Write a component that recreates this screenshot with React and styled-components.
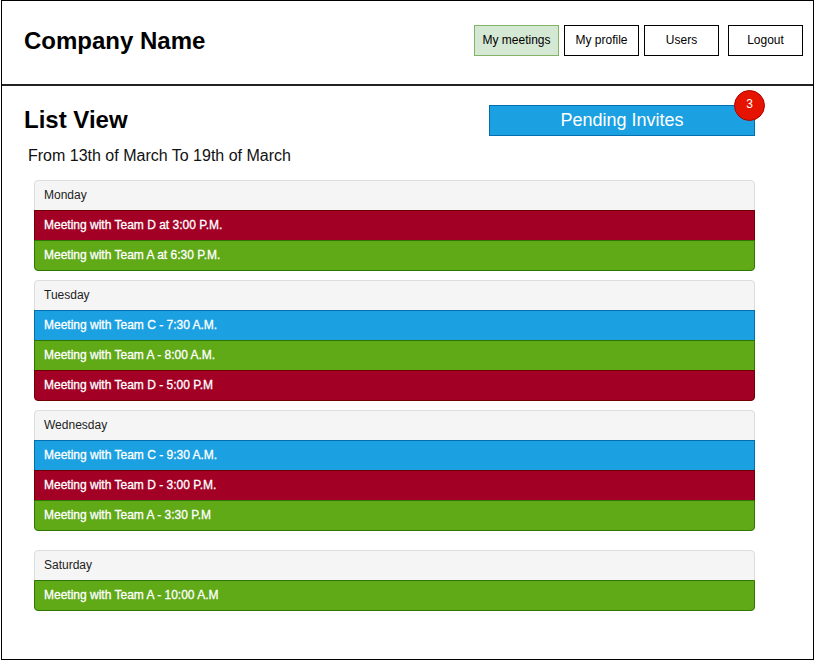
import React from "react"
import styled, { createGlobalStyle } from "styled-components"

const GlobalStyle = createGlobalStyle`
	body {
		margin: 0;
		font-family: "Liberation Sans", Arial, Helvetica, sans-serif;
		background: #fff;
	}
	* {
		box-sizing: border-box;
	}
`

const Frame = styled.div`
	margin-left: 1px;
	width: 813px;
	height: 660px;
	border: 1px solid #000;
	overflow: hidden;
`
const Header = styled.header`
	display: flex;
	justify-content: space-between;
	align-items: flex-start;
	height: 85px;
	padding: 0 10px 0 22px;
	border-bottom: 2px solid #222;
`
const Brand = styled.h1`
	margin: 26px 0 0;
	font-size: 24px;
	font-weight: bold;
	color: #000;
`
const Nav = styled.nav`
	display: flex;
	margin-top: 24px;
`
const NavButton = styled.button`
	width: ${p => p.$width || 75}px;
	height: 31px;
	margin-left: ${p => p.$gap || 5}px;
	padding: 0 0 1px;
	font-family: inherit;
	font-size: 12px;
	color: #000;
	background: ${p => (p.$active ? "#d5e8d4" : "#fff")};
	border: 1px solid ${p => (p.$active ? "#82b366" : "#000")};
	border-radius: 0;
	cursor: pointer;
`
const Main = styled.main`
	padding: 0 58px 0 22px;
`
const TitleRow = styled.div`
	display: flex;
	justify-content: space-between;
	align-items: flex-start;
`
const Title = styled.h2`
	margin: 20px 0 0;
	font-size: 24px;
	font-weight: bold;
	color: #000;
`
const PendingButton = styled.button`
	position: relative;
	width: 266px;
	height: 31px;
	margin-top: 19px;
	padding: 0;
	font-family: inherit;
	font-size: 18px;
	color: #fff;
	background: #1ba1e2;
	border: 1px solid #006eaf;
	border-radius: 0;
	cursor: pointer;
`
const Badge = styled.span`
	position: absolute;
	top: -16px;
	right: -11px;
	width: 31px;
	height: 31px;
	display: flex;
	align-items: center;
	justify-content: center;
	padding-bottom: 3px;
	font-size: 12px;
	color: #fff;
	background: #e51400;
	border: 1px solid #b20000;
	border-radius: 50%;
`
const Range = styled.p`
	margin: 11px 0 0 4px;
	font-size: 16px;
	color: #111;
`
const DayList = styled.div`
	margin: 15px 0 0 10px;
`
const DayCard = styled.section`
	margin-top: ${p => p.$gap}px;
	&:first-child {
		margin-top: 0;
	}
`
const DayHeader = styled.div`
	height: 31px;
	display: flex;
	align-items: center;
	padding: 0 0 1px 9px;
	font-size: 12px;
	color: #222;
	background: #f5f5f5;
	border: 1px solid #ddd;
	border-radius: 4px 4px 0 0;
`
const colors = {
	red: ["#a20025", "#6f0000"],
	green: ["#60a917", "#2d7600"],
	blue: ["#1ba1e2", "#006eaf"]
}
const MeetingRow = styled.div`
	height: 31px;
	margin-top: -1px;
	display: flex;
	align-items: center;
	padding: 0 0 1px 9px;
	font-size: 12px;
	color: #fff;
	-webkit-text-stroke: 0.3px #fff;
	background: ${p => colors[p.$color][0]};
	border: 1px solid ${p => colors[p.$color][1]};
	&:last-child {
		border-radius: 0 0 4px 4px;
	}
`

const days = [
	{
		name: "Monday",
		gap: 9,
		meetings: [
			["red", "Meeting with Team D at 3:00 P.M."],
			["green", "Meeting with Team A at 6:30 P.M."]
		]
	},
	{
		name: "Tuesday",
		gap: 9,
		meetings: [
			["blue", "Meeting with Team C - 7:30 A.M."],
			["green", "Meeting with Team A - 8:00 A.M."],
			["red", "Meeting with Team D - 5:00 P.M"]
		]
	},
	{
		name: "Wednesday",
		gap: 9,
		meetings: [
			["blue", "Meeting with Team C - 9:30 A.M."],
			["red", "Meeting with Team D - 3:00 P.M."],
			["green", "Meeting with Team A - 3:30 P.M"]
		]
	},
	{
		name: "Saturday",
		gap: 19,
		meetings: [["green", "Meeting with Team A - 10:00 A.M"]]
	}
]

export default function App() {
	return (
		<>
			<GlobalStyle />
			<Frame>
				<Header>
					<Brand>Company Name</Brand>
					<Nav>
						<NavButton $active $width={85} $gap={0}>My meetings</NavButton>
						<NavButton>My profile</NavButton>
						<NavButton>Users</NavButton>
						<NavButton $gap={9}>Logout</NavButton>
					</Nav>
				</Header>
				<Main>
					<TitleRow>
						<Title>List View</Title>
						<PendingButton>
							Pending Invites
							<Badge>3</Badge>
						</PendingButton>
					</TitleRow>
					<Range>From 13th of March To 19th of March</Range>
					<DayList>
						{days.map(day => (
							<DayCard key={day.name} $gap={day.gap}>
								<DayHeader>{day.name}</DayHeader>
								{day.meetings.map(([color, text]) => (
									<MeetingRow key={text} $color={color}>{text}</MeetingRow>
								))}
							</DayCard>
						))}
					</DayList>
				</Main>
			</Frame>
		</>
	)
}
